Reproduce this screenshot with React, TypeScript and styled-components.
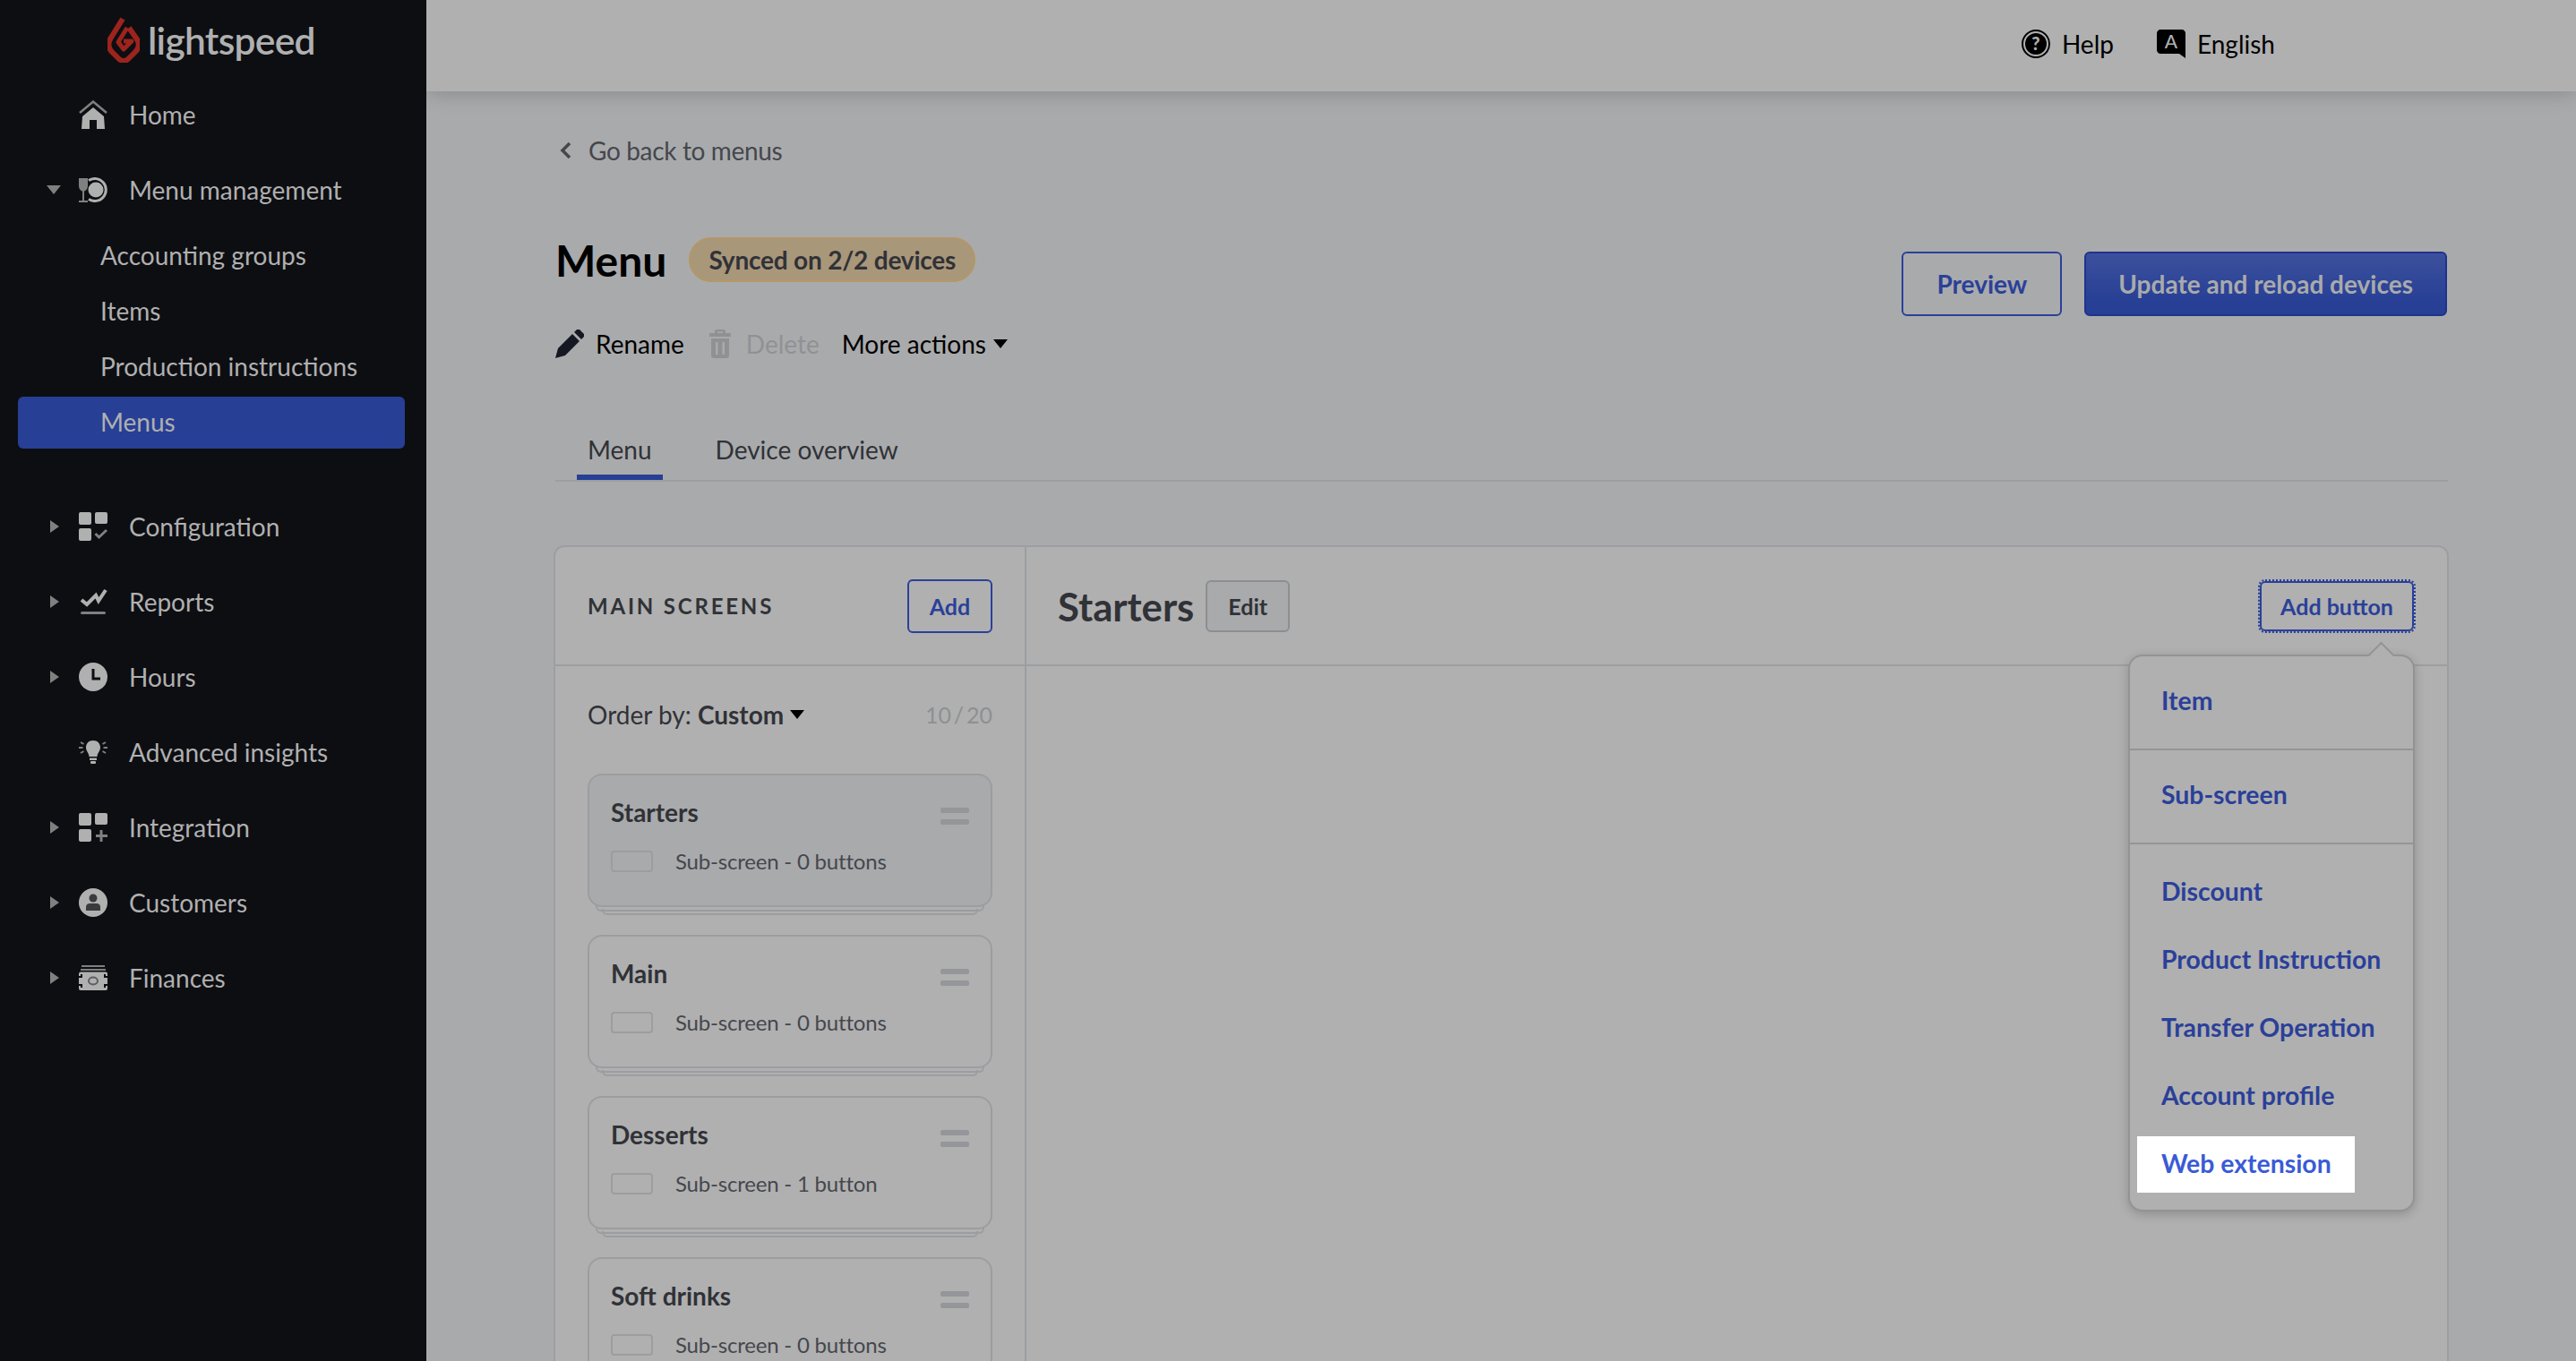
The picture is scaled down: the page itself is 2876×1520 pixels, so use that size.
import React from "react";
import styled, { createGlobalStyle } from "styled-components";

const Global = createGlobalStyle`
  html, body { margin: 0; padding: 0; height: 100%; overflow: hidden; background: #a9aaac; }
  body { font-family: Lato, "Open Sans", sans-serif; color: #303237; }
  #root { height: 100%; }
  * { box-sizing: border-box; }
`;

const Page = styled.div`
  display: flex;
  height: 100vh;
  overflow: hidden;
`;

/* ---------- Sidebar ---------- */
const Sidebar = styled.aside`
  flex: 0 0 476px;
  background: #0d0e12;
  color: #b0b0b0;
  font-size: 28px;
`;
const LogoBox = styled.div`
  height: 87px;
  display: flex;
  align-items: flex-start;
  padding: 18px 0 0 120px;
  gap: 9px;
`;
const LogoWord = styled.span`
  font-size: 42.5px;
  font-weight: 600;
  line-height: 54px;
  letter-spacing: -0.7px;
  color: #b0b0b0;
`;
const NavRow = styled.div<{ $gapTop?: number }>`
  height: 84px;
  display: flex;
  align-items: center;
  padding: 0 0 2px 52px;
  margin-top: ${(p) => p.$gapTop ?? 0}px;
`;
const CaretSlot = styled.span`
  flex: 0 0 36px;
  display: flex;
  align-items: center;
`;
const IconSlot = styled.span`
  flex: 0 0 32px;
  height: 32px;
  display: flex;
  align-items: center;
  justify-content: center;
  margin-right: 24px;
  svg { display: block; }
`;
const SubList = styled.div`
  display: flex;
  flex-direction: column;
`;
const SubItem = styled.div<{ $active?: boolean }>`
  height: ${(p) => (p.$active ? 58 : 62)}px;
  margin: ${(p) => (p.$active ? "2px 24px 2px 20px" : "0 24px 0 20px")};
  padding: 0 0 2px 92px;
  display: flex;
  align-items: center;
  border-radius: 6px;
  background: ${(p) => (p.$active ? "#273f95" : "transparent")};
`;
const Down = styled.span`
  width: 0;
  height: 0;
  border-left: 8px solid transparent;
  border-right: 8px solid transparent;
  border-top: 10px solid #808080;
`;
const Right = styled.span`
  width: 0;
  height: 0;
  margin-left: 4px;
  border-top: 7px solid transparent;
  border-bottom: 7px solid transparent;
  border-left: 10px solid #808080;
`;

/* ---------- Main ---------- */
const MainCol = styled.div`
  flex: 1;
  min-width: 0;
  display: flex;
  flex-direction: column;
  overflow: hidden;
`;
const TopBar = styled.header`
  flex: 0 0 102px;
  background: #b0b0b0;
  display: flex;
  align-items: center;
  justify-content: flex-end;
  padding: 0 336px 4px 0;
  gap: 48px;
  font-size: 28px;
  color: #000;
  box-shadow: 0 2px 22px rgba(0, 0, 0, 0.2);
  position: relative;
  z-index: 2;
`;
const TopLink = styled.span`
  display: flex;
  align-items: center;
  gap: 13px;
  line-height: 30px;
`;
const Content = styled.main`
  padding: 47px 144px 0;
`;
const BackLink = styled.div`
  height: 40px;
  display: flex;
  align-items: center;
  gap: 19px;
  font-size: 28px;
  letter-spacing: -0.35px;
  color: #45474d;
  padding: 0 0 2px 5px;
`;
const HeadRow = styled.div`
  display: flex;
  justify-content: space-between;
  align-items: flex-start;
  margin-top: 76px;
`;
const TitleRow = styled.div`
  height: 50px;
  display: flex;
  align-items: center;
  gap: 25px;
`;
const Title = styled.h1`
  margin: 0;
  font-size: 48px;
  font-weight: 700;
  color: #000;
`;
const Badge = styled.span`
  height: 50px;
  padding: 0 20px;
  display: flex;
  align-items: center;
  border: 2px solid #b39766;
  border-radius: 25px;
  background: #a9977a;
  font-size: 28px;
  letter-spacing: -0.2px;
  font-weight: 700;
  color: #303237;
`;
const Actions = styled.div`
  height: 40px;
  margin-top: 50px;
  display: flex;
  align-items: center;
  padding-bottom: 2px;
  font-size: 28px;
  color: #000;
`;
const ActionItem = styled.span<{ $muted?: boolean; $gap: number; $after: number }>`
  display: flex;
  align-items: center;
  gap: ${(p) => p.$gap}px;
  margin-right: ${(p) => p.$after}px;
  color: ${(p) => (p.$muted ? "#8f9294" : "#000")};
`;
const CaretDown = styled.span`
  width: 0;
  height: 0;
  border-left: 8px solid transparent;
  border-right: 8px solid transparent;
  border-top: 10px solid #000;
`;
const HeadButtons = styled.div`
  display: flex;
  gap: 25px;
  margin-top: 16px;
`;
const OutlineButton = styled.button`
  height: 72px;
  padding: 0 37px;
  border: 2px solid #2a4099;
  border-radius: 6px;
  background: transparent;
  color: #2a4099;
  font: 700 28px Lato, sans-serif;
`;
const SolidButton = styled.button`
  height: 72px;
  padding: 0 36px;
  border: 2px solid #1f338c;
  border-radius: 6px;
  background: linear-gradient(#3c509c, #273f95 80%);
  color: #a9aaac;
  font: 700 28px Lato, sans-serif;
`;
const Tabs = styled.div`
  margin: 71px -1px 0 0;
  height: 62px;
  display: flex;
  border-bottom: 2px solid #9c9ea1;
  padding-left: 24px;
  gap: 47px;
`;
const Tab = styled.div<{ $active?: boolean }>`
  height: 60px;
  padding: 0 12px 3px;
  display: flex;
  align-items: center;
  font-size: 28px;
  color: #303237;
  border-bottom: 6px solid ${(p) => (p.$active ? "#273f95" : "transparent")};
`;
const Panel = styled.section`
  margin: 71px -2px 0 -2px;
  border: 2px solid #9c9ea1;
  border-radius: 12px;
  background: #b0b0b0;
  display: grid;
  grid-template-columns: 526px 1fr;
  grid-template-rows: 133px auto;
`;
const LeftHead = styled.div`
  border-right: 2px solid #9c9ea1;
  border-bottom: 2px solid #9c9ea1;
  display: flex;
  align-items: center;
  justify-content: space-between;
  padding: 0 36px;
`;
const Eyebrow = styled.span`
  font-size: 24px;
  font-weight: 700;
  letter-spacing: 2.8px;
  color: #303237;
`;
const SmallOutline = styled.button`
  width: 95px;
  height: 60px;
  border: 2px solid #2a4099;
  border-radius: 6px;
  background: transparent;
  color: #2a4099;
  font: 700 25px Lato, sans-serif;
`;
const RightHead = styled.div`
  border-bottom: 2px solid #9c9ea1;
  display: flex;
  align-items: center;
  padding: 0 35px;
  position: relative;
`;
const ScreenTitle = styled.h2`
  margin: 0 13px 0 0;
  font-size: 43.6px;
  font-weight: 700;
  color: #303237;
`;
const EditButton = styled.button`
  width: 94px;
  height: 58px;
  border: 2px solid #8c8e91;
  border-radius: 6px;
  background: #a9aaac;
  color: #303237;
  font: 700 25px Lato, sans-serif;
`;
const FocusButton = styled.button`
  margin-left: auto;
  width: 172px;
  height: 56px;
  margin-right: 2px;
  border: 2px solid #2a4099;
  border-radius: 6px;
  outline: 2px dotted #2a4099;
  background: transparent;
  color: #2a4099;
  font: 700 25px Lato, sans-serif;
`;
const Dropdown = styled.div`
  position: absolute;
  top: 120px;
  right: 36px;
  width: 320px;
  height: 622px;
  z-index: 3;
  background: #b0b0b0;
  border: 2px solid #929394;
  border-radius: 16px;
  box-shadow: 0 3px 12px rgba(0, 0, 0, 0.2);
  &::before {
    content: "";
    position: absolute;
    top: -12px;
    right: 25px;
    width: 19px;
    height: 19px;
    background: #b0b0b0;
    border-top: 2px solid #929394;
    border-left: 2px solid #929394;
    transform: rotate(45deg);
  }
`;
const MenuGroup = styled.div<{ $divided?: boolean }>`
  display: flex;
  flex-direction: column;
  gap: 13px;
  padding: ${(p) => (p.$divided ? "22px 0 0" : "19px 0 21px")};
  border-bottom: ${(p) => (p.$divided ? "none" : "2px solid #949597")};
`;
const MenuItem = styled.div<{ $spot?: boolean }>`
  height: 63px;
  width: 243px;
  margin-left: 8px;
  padding: 0 0 3px 27px;
  display: flex;
  align-items: center;
  white-space: nowrap;
  font-size: 28.4px;
  font-weight: 700;
  color: ${(p) => (p.$spot ? "#3a5bd6" : "#2a4099")};
  background: ${(p) => (p.$spot ? "#fff" : "transparent")};
`;
const LeftBody = styled.div`
  border-right: 2px solid #9c9ea1;
  padding: 36px 36px 0;
`;
const OrderRow = styled.div`
  height: 36px;
  display: flex;
  align-items: center;
  justify-content: space-between;
  font-size: 28px;
`;
const OrderLabel = styled.span`
  display: flex;
  align-items: center;
  gap: 7px;
  b { font-weight: 700; }
  span.sp { white-space: pre; }
`;
const Count = styled.span`
  font-size: 25px;
  word-spacing: -3.5px;
  color: #8d9092;
`;
const CardList = styled.div`
  margin-top: 48px;
  display: flex;
  flex-direction: column;
  gap: 31px;
`;
const Card = styled.div<{ $selected?: boolean }>`
  position: relative;
  height: 149px;
  padding: 25px 24px 0;
  border: 2px solid #9b9da0;
  border-radius: 16px;
  background: ${(p) => (p.$selected ? "#a9aaac" : "#b0b0b0")};
  &::before,
  &::after {
    content: "";
    position: absolute;
    border: 2px solid #9b9da0;
    border-top: none;
    border-radius: 0 0 6px 6px;
  }
  &::before {
    left: 7px;
    right: 7px;
    bottom: -7px;
    height: 6px;
  }
  &::after {
    left: 14px;
    right: 14px;
    bottom: -11px;
    height: 5px;
  }
`;
const CardTop = styled.div`
  display: flex;
  justify-content: space-between;
  align-items: center;
  height: 32px;
`;
const CardName = styled.span`
  font-size: 28px;
  font-weight: 700;
  color: #303237;
`;
const Handle = styled.span`
  width: 32px;
  height: 19px;
  margin-top: 8px;
  display: flex;
  flex-direction: column;
  justify-content: space-between;
  i {
    display: block;
    height: 6px;
    border-radius: 2px;
    background: #94969a;
  }
`;
const CardSub = styled.div`
  margin-top: 24px;
  display: flex;
  align-items: center;
  gap: 25px;
  font-size: 24px;
  letter-spacing: -0.2px;
  color: #45474d;
`;
const Swatch = styled.span`
  width: 47px;
  height: 24px;
  border: 2px solid #9b9da0;
  border-radius: 4px;
`;

/* ---------- Icons ---------- */
const L = "#b0b0b0";
const G = "#808080";

const Flame = () => (
  <svg width="36" height="52" viewBox="0 0 36 52" fill="none">
    <path d="M17 3 L4 24 C0 30 1 36 5 40 L13 48 C16 50.500 20 50.500 23 48 L31 40 C35 36 36 31 33 26 L24 13" stroke="#9c241d" strokeWidth="6" strokeLinejoin="round" />
    <path d="M22 13 L12 29 L18 37 L27 28 H18" stroke="#9c241d" strokeWidth="5" strokeLinejoin="round" />
  </svg>
);
const HomeIcon = () => (
  <svg width="32" height="32" viewBox="0 0 32 32">
    <path d="M1 14 L16 1.500 L31 14" fill="none" stroke={G} strokeWidth="2.500" />
    <path d="M3 32 L4 18 L16 8 L28 18 L29 32 H20 V22 H12 V32 Z" fill={L} />
  </svg>
);
const PlateIcon = () => (
  <svg width="32" height="28" viewBox="0 0 32 28">
    <path d="M0 1 H10 V9 C10 13 8 15 6 15.500 V26 H10 V28 H0 V26 H4 V15.500 C2 15 0 13 0 9 Z" fill={G} />
    <path d="M11 3.500 A12.500 12.500 0 1 1 11 24.500" fill="none" stroke={L} strokeWidth="3" />
    <circle cx="19" cy="14" r="8.500" fill={L} />
  </svg>
);
const GridBase = () => (
  <>
    <rect x="0" y="0" width="14" height="14" rx="2" fill={L} />
    <rect x="18" y="0" width="14" height="13" rx="2" fill={L} />
    <rect x="0" y="18" width="14" height="14" rx="2" fill={L} />
  </>
);
const ConfigIcon = () => (
  <svg width="32" height="32" viewBox="0 0 32 32">
    <GridBase />
    <path d="M18.500 24 L22.500 28 L31 20" fill="none" stroke={G} strokeWidth="3" />
  </svg>
);
const PlusGridIcon = () => (
  <svg width="32" height="32" viewBox="0 0 32 32">
    <GridBase />
    <path d="M25 19 V32 M19 25.500 H32" fill="none" stroke={G} strokeWidth="3" />
  </svg>
);
const ReportIcon = () => (
  <svg width="32" height="32" viewBox="0 0 32 32">
    <path d="M3 14 L9 19 L19 9 L22 15 L30 3" fill="none" stroke={L} strokeWidth="4" />
    <rect x="2" y="27" width="28" height="3" rx="1.500" fill={G} />
  </svg>
);
const ClockIcon = () => (
  <svg width="32" height="32" viewBox="0 0 32 32">
    <circle cx="16" cy="16" r="16" fill={L} />
    <path d="M16 7 V18 H24" fill="none" stroke="#0d0e12" strokeWidth="3" />
  </svg>
);
const BulbIcon = () => (
  <svg width="32" height="26" viewBox="0 0 32 26">
    <path d="M16 0 C21 0 24 3.500 24 8 C24 12 21 13 20.500 18 H11.500 C11 13 8 12 8 8 C8 3.500 11 0 16 0 Z" fill={L} />
    <rect x="12" y="19.500" width="8" height="2.500" fill={L} />
    <rect x="13" y="23" width="6" height="3" rx="1" fill={L} />
    <path d="M2 2 L5.500 4 M0 8 H4.500 M2 14 L5.500 12 M30 2 L26.500 4 M32 8 H27.500 M30 14 L26.500 12" stroke={G} strokeWidth="2" />
  </svg>
);
const UserIcon = () => (
  <svg width="32" height="32" viewBox="0 0 32 32">
    <circle cx="16" cy="16" r="16" fill={L} />
    <circle cx="16" cy="11" r="4.500" fill="#3a3b3e" />
    <path d="M8 25 V21 C8 18 10 17 12 17 H20 C22 17 24 18 24 21 V25 Z" fill="#3a3b3e" />
  </svg>
);
const MoneyIcon = () => (
  <svg width="32" height="28" viewBox="0 0 32 28">
    <rect x="3" y="0" width="26" height="2" fill={G} />
    <rect x="2" y="4" width="28" height="2" fill={G} />
    <rect x="0" y="7.500" width="32" height="20.500" rx="2" fill={L} />
    <ellipse cx="16" cy="17.500" rx="5" ry="4" fill="none" stroke="#5c5d60" strokeWidth="2" />
    <path d="M0 13 L3 13 L3 10 M32 13 L29 13 L29 10 M0 22 H3 V25 M32 22 H29 V25" fill="none" stroke="#0d0e12" strokeWidth="2" />
  </svg>
);
const BackChevron = () => (
  <svg width="13" height="20" viewBox="0 0 13 20">
    <path d="M11 2 L3 10 L11 18" fill="none" stroke="#45474d" strokeWidth="3.500" />
  </svg>
);
const Pencil = () => (
  <svg width="32" height="32" viewBox="0 0 32 32">
    <path d="M0 32 L3 21 L19 5 L27 13 L11 29 Z M21 3 L24 0 C25 -0.500 26 -0.500 27 0 L32 5 C32.500 6 32.500 7 32 8 L29 11 Z" fill="#151823" />
  </svg>
);
const Trash = () => (
  <svg width="24" height="32" viewBox="0 0 24 32" fill="#8f9294">
    <path d="M8 0 H16 C17 0 18 1 18 2 V4 H23 C23.500 4 24 4.500 24 5 V8 H0 V5 C0 4.500 .5 4 1 4 H6 V2 C6 1 7 0 8 0 Z M9 2.500 V4 H15 V2.500 Z" fillRule="evenodd" />
    <path d="M2 10 H22 V29 C22 31 21 32 19 32 H5 C3 32 2 31 2 29 Z M7 14 V28 H9.500 V14 Z M14.500 14 V28 H17 V14 Z" fillRule="evenodd" />
  </svg>
);
const HelpIcon = () => (
  <svg width="32" height="32" viewBox="0 0 32 32">
    <circle cx="16" cy="16" r="15" fill="none" stroke="#000" strokeWidth="2" />
    <circle cx="16" cy="16" r="12" fill="#000" />
    <text x="16" y="23" textAnchor="middle" fontFamily="Lato, sans-serif" fontWeight="900" fontSize="20" fill="#b0b0b0">?</text>
  </svg>
);
const LangIcon = () => (
  <svg width="32" height="32" viewBox="0 0 32 32">
    <path d="M4 0 H28 C30 0 32 2 32 4 V32 L25 27 H4 C2 27 0 25 0 23 V4 C0 2 2 0 4 0 Z" fill="#000" />
    <text x="16" y="21" textAnchor="middle" fontFamily="Lato, sans-serif" fontWeight="500" fontSize="21" fill="#b0b0b0">A</text>
  </svg>
);

const navTop = [
  { label: "Configuration", icon: <ConfigIcon />, caret: true },
  { label: "Reports", icon: <ReportIcon />, caret: true },
  { label: "Hours", icon: <ClockIcon />, caret: true },
  { label: "Advanced insights", icon: <BulbIcon />, caret: false },
  { label: "Integration", icon: <PlusGridIcon />, caret: true },
  { label: "Customers", icon: <UserIcon />, caret: true },
  { label: "Finances", icon: <MoneyIcon />, caret: true },
];

const cards = [
  { name: "Starters", sub: "Sub-screen - 0 buttons", selected: true },
  { name: "Main", sub: "Sub-screen - 0 buttons" },
  { name: "Desserts", sub: "Sub-screen - 1 button" },
  { name: "Soft drinks", sub: "Sub-screen - 0 buttons" },
];

export default function App() {
  return (
    <Page>
      <Global />
      <Sidebar>
        <LogoBox>
          <Flame />
          <LogoWord>lightspeed</LogoWord>
        </LogoBox>
        <NavRow>
          <CaretSlot />
          <IconSlot><HomeIcon /></IconSlot>
          Home
        </NavRow>
        <NavRow>
          <CaretSlot><Down /></CaretSlot>
          <IconSlot><PlateIcon /></IconSlot>
          Menu management
        </NavRow>
        <SubList>
          <SubItem>Accounting groups</SubItem>
          <SubItem>Items</SubItem>
          <SubItem>Production instructions</SubItem>
          <SubItem $active>Menus</SubItem>
        </SubList>
        {navTop.map((n, i) => (
          <NavRow key={n.label} $gapTop={i === 0 ? 44 : undefined}>
            <CaretSlot>{n.caret && <Right />}</CaretSlot>
            <IconSlot>{n.icon}</IconSlot>
            {n.label}
          </NavRow>
        ))}
      </Sidebar>
      <MainCol>
        <TopBar>
          <TopLink><HelpIcon />Help</TopLink>
          <TopLink><LangIcon />English</TopLink>
        </TopBar>
        <Content>
          <BackLink><BackChevron />Go back to menus</BackLink>
          <HeadRow>
            <div>
              <TitleRow>
                <Title>Menu</Title>
                <Badge>Synced on 2/2 devices</Badge>
              </TitleRow>
              <Actions>
                <ActionItem $gap={13} $after={28}><Pencil />Rename</ActionItem>
                <ActionItem $muted $gap={17} $after={25}><Trash />Delete</ActionItem>
                <ActionItem $gap={8} $after={0}>More actions<CaretDown /></ActionItem>
              </Actions>
            </div>
            <HeadButtons>
              <OutlineButton>Preview</OutlineButton>
              <SolidButton>Update and reload devices</SolidButton>
            </HeadButtons>
          </HeadRow>
          <Tabs>
            <Tab $active>Menu</Tab>
            <Tab>Device overview</Tab>
          </Tabs>
          <Panel>
            <LeftHead>
              <Eyebrow>MAIN SCREENS</Eyebrow>
              <SmallOutline>Add</SmallOutline>
            </LeftHead>
            <RightHead>
              <ScreenTitle>Starters</ScreenTitle>
              <EditButton>Edit</EditButton>
              <FocusButton>Add button</FocusButton>
              <Dropdown>
                <MenuGroup><MenuItem>Item</MenuItem></MenuGroup>
                <MenuGroup><MenuItem>Sub-screen</MenuItem></MenuGroup>
                <MenuGroup $divided>
                  <MenuItem>Discount</MenuItem>
                  <MenuItem>Product Instruction</MenuItem>
                  <MenuItem>Transfer Operation</MenuItem>
                  <MenuItem>Account profile</MenuItem>
                  <MenuItem $spot>Web extension</MenuItem>
                </MenuGroup>
              </Dropdown>
            </RightHead>
            <LeftBody>
              <OrderRow>
                <OrderLabel>
                  <span className="sp">Order by: <b>Custom</b></span>
                  <CaretDown />
                </OrderLabel>
                <Count>10 / 20</Count>
              </OrderRow>
              <CardList>
                {cards.map((c) => (
                  <Card key={c.name} $selected={c.selected}>
                    <CardTop>
                      <CardName>{c.name}</CardName>
                      <Handle><i /><i /></Handle>
                    </CardTop>
                    <CardSub><Swatch />{c.sub}</CardSub>
                  </Card>
                ))}
              </CardList>
            </LeftBody>
            <div />
          </Panel>
        </Content>
      </MainCol>
    </Page>
  );
}
